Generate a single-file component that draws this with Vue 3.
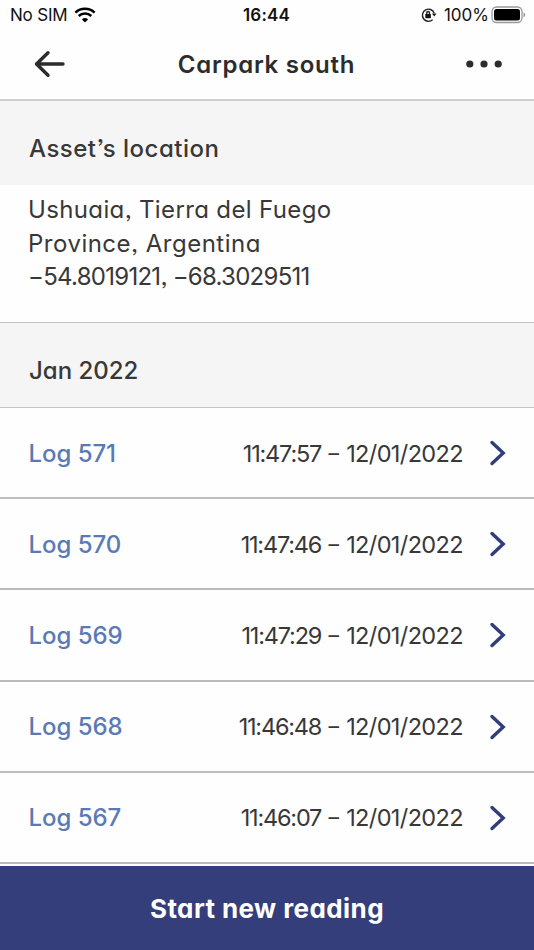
<template>
  <div class="screen">
    <div class="status-bar">
      <div class="status-left">
        <span class="carrier">No SIM</span>
        <svg class="wifi" viewBox="0 0 22 16" width="22" height="16">
          <path d="M1.4 5.6a14 14 0 0 1 19.2 0" />
          <path d="M4.7 9a9.3 9.3 0 0 1 12.6 0" />
          <path class="wifi-dot" d="M7.9 12.4a4.6 4.6 0 0 1 6.2 0L11 15.5z" />
        </svg>
      </div>
      <span class="clock">16:44</span>
      <div class="status-right">
        <svg class="lock" viewBox="0 0 16 16" width="16" height="16">
          <path d="M11.6 12.8A6.1 6.1 0 1 1 13.2 6" />
          <path class="solid" d="M10.9 6.4h4.6l-2.3 3.1z" />
          <rect class="solid" x="4.3" y="7" width="5.6" height="4.2" rx=".6" />
          <path d="M5.7 7.3V5.9a1.4 1.4 0 0 1 2.8 0v1.4" />
        </svg>
        <span class="percent">100%</span>
        <svg class="battery" viewBox="0 0 35 18" width="35" height="18">
          <rect class="shell" x="1" y="1" width="30" height="15.5" rx="4.5" />
          <rect x="3" y="3" width="26" height="11.5" rx="2.5" />
          <path class="tip" d="M32.5 6.2q1.8.8 1.8 2.6t-1.8 2.6z" />
        </svg>
      </div>
    </div>

    <header class="nav">
      <button class="icon-btn" aria-label="Back">
        <svg viewBox="0 0 32 28" width="32" height="28">
          <path d="M15 2.8L3.5 14 15 25.2M3.5 14h26.5" />
        </svg>
      </button>
      <h1 class="title">Carpark south</h1>
      <button class="icon-btn" aria-label="More">
        <svg class="dots" viewBox="0 0 38 8" width="38" height="8">
          <circle v-for="x in [4.8, 19, 33.2]" :key="x" :cx="x" cy="4" r="3.6" />
        </svg>
      </button>
    </header>

    <h2 class="section"><span class="asset-heading">Asset’s location</span></h2>
    <div class="address">
      <div class="place">Ushuaia, Tierra del Fuego</div>
      <div class="region">Province, Argentina</div>
      <div class="coords">−54.8019121, −68.3029511</div>
    </div>

    <h2 class="section month">Jan 2022</h2>
    <ul class="logs">
      <li v-for="log in logs" :key="log.id" class="log">
        <span class="log-name">Log {{ log.id }}</span>
        <span class="log-time">{{ log.time }}</span>
        <span class="log-dash">–</span>
        <span class="log-date">{{ log.date }}</span>
        <svg class="chevron" viewBox="0 0 18 28" width="18" height="28">
          <path d="M3 3.5L14.2 14 3 24.5" />
        </svg>
      </li>
    </ul>

    <button class="start-btn">Start new reading</button>
  </div>
</template>

<script setup>
import { ref } from 'vue'

const logs = ref([
  { id: 571, time: '11:47:57', date: '12/01/2022' },
  { id: 570, time: '11:47:46', date: '12/01/2022' },
  { id: 569, time: '11:47:29', date: '12/01/2022' },
  { id: 568, time: '11:46:48', date: '12/01/2022' },
  { id: 567, time: '11:46:07', date: '12/01/2022' }
])
</script>

<style>
body {
  margin: 0;
  background: #fff;
}
</style>

<style scoped>
.screen {
  display: flex;
  flex-direction: column;
  height: 950px;
  overflow: hidden;
  background: #fefefe;
  color: #383838;
  font-family: Inter, 'Open Sans', sans-serif;
  font-feature-settings: 'cv11' 1, 'ss03' 1, 'calt' 0;
}
button {
  border: none;
  background: none;
  padding: 0;
  font: inherit;
  font-feature-settings: inherit;
}
.status-bar {
  display: grid;
  grid-template-columns: 1fr auto 1fr;
  align-items: center;
  height: 29px;
  padding: 0 8px 0 10px;
  color: #111;
  font-size: 17px;
  line-height: 28px;
  font-feature-settings: normal;
}
.status-left,
.status-right {
  display: flex;
  align-items: center;
}
.status-right {
  justify-content: flex-end;
}
.carrier,
.percent,
.clock {
  padding-top: 1px;
}
.carrier {
  letter-spacing: -0.2px;
}
.wifi {
  margin-left: 7px;
  fill: none;
  stroke: #000;
  stroke-width: 2.5;
}
.wifi-dot {
  fill: #000;
  stroke: none;
}
.clock {
  margin-right: 3px;
  font-weight: 600;
  letter-spacing: 0.2px;
}
.lock {
  margin-right: 7px;
  fill: none;
  stroke: #222;
  stroke-width: 1.4;
}
.lock .solid {
  fill: #111;
  stroke: none;
}
.battery {
  margin-left: 2px;
}
.shell {
  fill: none;
  stroke: #999;
  stroke-width: 1.3;
}
.tip {
  fill: #999;
}
.nav {
  display: flex;
  align-items: center;
  justify-content: space-between;
  box-sizing: border-box;
  height: 72px;
  padding: 0 31px 0 33px;
  border-bottom: 2px solid #cfcfcf;
}
.icon-btn {
  display: flex;
}
.icon-btn svg {
  fill: none;
  stroke: #2c2c2c;
  stroke-width: 3.4;
  stroke-linecap: round;
  stroke-linejoin: round;
}
.icon-btn .dots {
  fill: #2c2c2c;
  stroke: none;
}
.title {
  margin: 0;
  padding-left: 3px;
  color: #2c2c2c;
  font-size: 24px;
  font-weight: 600;
  letter-spacing: 0.75px;
}
.section {
  display: flex;
  align-items: center;
  box-sizing: border-box;
  height: 84px;
  margin: 0;
  padding: 10px 29px 0;
  background: #f5f5f5;
  font-size: 24px;
  font-weight: 500;
}
.asset-heading {
  letter-spacing: 0.5px;
}
.address {
  box-sizing: border-box;
  height: 137px;
  padding: 8px 28px 0;
  font-size: 24px;
  line-height: 33.7px;
  white-space: nowrap;
}
.place {
  letter-spacing: 0.36px;
}
.region {
  letter-spacing: 0.5px;
}
.coords {
  letter-spacing: -0.72px;
}
.month {
  height: 86px;
  border-top: 1px solid #c4c4c4;
  border-bottom: 1px solid #c4c4c4;
}
.logs {
  flex: 1;
  margin: 0;
  padding: 0;
  list-style: none;
}
.log {
  display: flex;
  align-items: center;
  box-sizing: border-box;
  height: 91.2px;
  padding: 1px 27px 0 28.5px;
  border-bottom: 2px solid #bcbcbc;
  font-size: 23.5px;
  white-space: nowrap;
}
.log-name {
  margin-right: auto;
  color: #5a7ab5;
  font-size: 24px;
  font-weight: 500;
  letter-spacing: -0.05px;
}
.log-time {
  letter-spacing: -1.2px;
}
.log-dash {
  width: 25px;
  font-size: 21px;
  text-align: center;
}
.log-date {
  letter-spacing: -0.62px;
}
.chevron {
  margin-left: 26px;
  fill: none;
  stroke: #323e7b;
  stroke-width: 3.4;
  stroke-linecap: round;
}
.start-btn {
  flex: none;
  height: 84px;
  background: #333e7b;
  color: #fff;
  font-size: 26px;
  font-weight: 700;
  letter-spacing: 0.42px;
}
</style>
